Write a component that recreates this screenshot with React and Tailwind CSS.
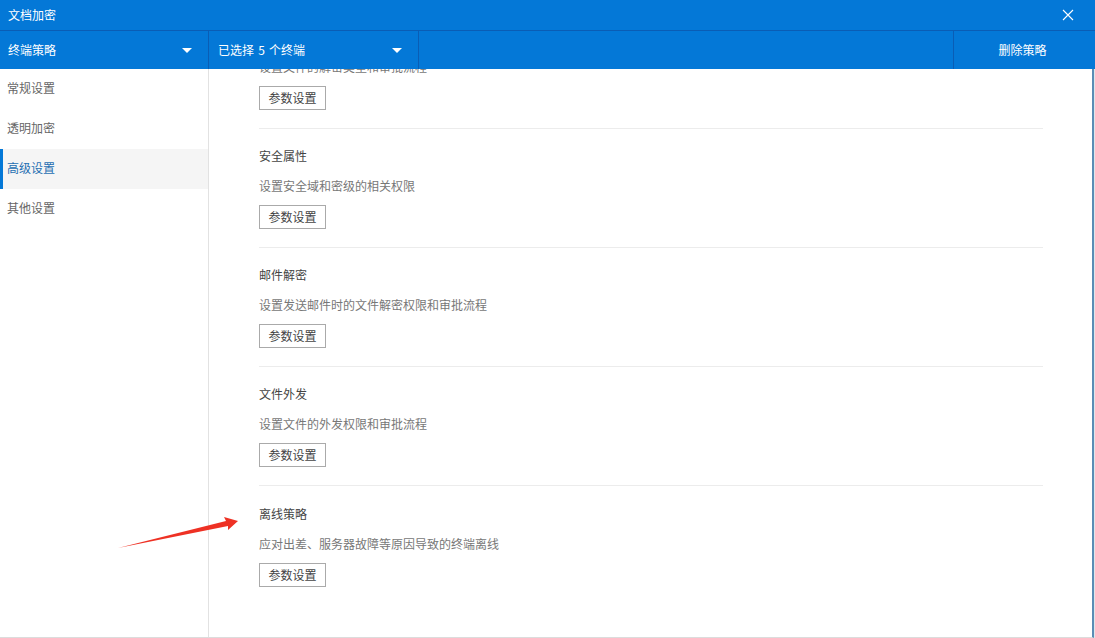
import React from 'react';

const NAV_ITEMS = ['常规设置', '透明加密', '高级设置', '其他设置'];

// first section is scrolled under the toolbar, only its description peeks out
const SECTIONS = [
  { desc: '设置文件的解密类型和审批流程' },
  { title: '安全属性', desc: '设置安全域和密级的相关权限' },
  { title: '邮件解密', desc: '设置发送邮件时的文件解密权限和审批流程' },
  { title: '文件外发', desc: '设置文件的外发权限和审批流程' },
  { title: '离线策略', desc: '应对出差、服务器故障等原因导致的终端离线' },
];

const Caret = () => (
  <span className="h-0 w-0 border-x-[5px] border-t-[5px] border-x-transparent border-t-white" />
);

const Section = ({ title, desc, last }) => (
  <div className={last ? 'pt-[18px] pb-[18px]' : 'border-b border-[#ececec] pb-[18px]'}>
    {title && (
      <div className={last ? 'mb-2.5 h-5 leading-5 text-[#444]' : 'mt-[17px] mb-2.5 h-5 leading-5 text-[#444]'}>
        {title}
      </div>
    )}
    <div className="h-5 leading-5 text-[#777]">{desc}</div>
    <button className="mt-[9px] block h-6 w-[67px] border border-[#aaa] bg-white leading-[22px] text-[#444]">
      参数设置
    </button>
  </div>
);

const App = () => {
  return (
    <div
      className="relative flex h-[638px] w-[1095px] flex-col overflow-hidden bg-[#dfe6ec] text-xs"
      style={{ fontFamily: '"Noto Sans CJK SC", "Noto Sans", sans-serif' }}
    >
      <div className="flex h-[30px] items-center justify-between bg-[#0478d7] pr-[21px] pl-2 text-white">
        <span>文档加密</span>
        <svg width="12" height="12" viewBox="0 0 12 12" fill="none" stroke="white" strokeWidth="1.1">
          <path d="M1 1l10 10M11 1L1 11" />
        </svg>
      </div>

      <div className="flex h-[39px] border-t border-[#0a5db5] bg-[#0478d7] text-white">
        <div className="flex w-[209px] items-center justify-between border-r border-[#0a5db5] pr-[16px] pl-2">
          <span>终端策略</span>
          <Caret />
        </div>
        <div className="flex w-[210px] items-center justify-between border-r border-[#0a5db5] pr-[16px] pl-[9px]">
          <span className="[word-spacing:1.5px]">已选择 5 个终端</span>
          <Caret />
        </div>
        <div className="flex-1" />
        <div className="flex w-[142px] items-center justify-center border-l border-[#0a5db5] pr-1">删除策略</div>
      </div>

      <div className="mr-px flex min-h-0 flex-1 border-r-2 border-b border-r-[#5a8db5] border-b-[#dcdcdc] bg-white">
        <div className="w-[209px] shrink-0 border-r border-[#e2e2e2]">
          {NAV_ITEMS.map(item => (
            <div
              key={item}
              className={
                item === '高级设置'
                  ? 'h-10 border-l-[3px] border-[#0478d7] bg-[#f5f5f5] pl-1 leading-[38px] text-[#1f6fb2]'
                  : 'h-10 pl-[7px] leading-[38px] text-[#666]'
              }
            >
              {item}
            </div>
          ))}
        </div>
        <div className="min-w-0 flex-1 overflow-hidden pr-[49px] pl-[50px]">
          <div className="-mt-3">
            {SECTIONS.map((section, i) => (
              <Section key={section.desc} {...section} last={i === SECTIONS.length - 1} />
            ))}
          </div>
        </div>
      </div>

      <svg className="absolute top-[510px] left-[110px]" width="135" height="45" viewBox="110 510 135 45">
        <polygon points="118,548 226,521 224,517 238,521 228,530 228,526" fill="#ee3124" />
      </svg>
    </div>
  );
};

export default App;
